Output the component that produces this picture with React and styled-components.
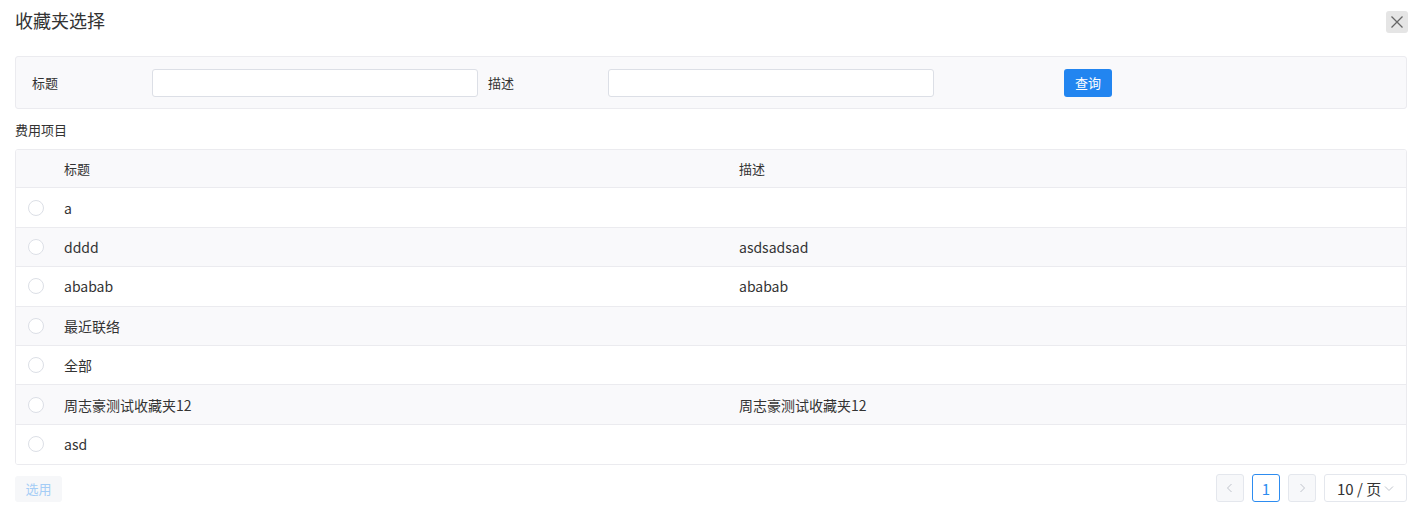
import React from "react";
import styled, { createGlobalStyle } from "styled-components";

const Global = createGlobalStyle`
  html, body { margin: 0; padding: 0; background: #fff; }
  body { font-family: "Noto Sans CJK SC", "Noto Sans", sans-serif; color: #333; }
  * { box-sizing: border-box; }
`;

const Page = styled.div`
  padding: 0 17px 0 15px;
  width: 1424px;
`;

const Header = styled.div`
  height: 42px;
  display: flex;
  align-items: center;
  justify-content: space-between;
  margin-bottom: 14px;
`;

const Title = styled.div`
  font-size: 18px;
  color: #333;
  line-height: 1;
  margin-top: -2px;
`;

const CloseBtn = styled.button`
  width: 22px;
  height: 22px;
  margin-right: -1px;
  margin-top: 1px;
  border: none;
  border-radius: 3px;
  background: #e5e5e5;
  padding: 0;
  display: flex;
  align-items: center;
  justify-content: center;
  cursor: pointer;
`;

const SearchPanel = styled.div`
  height: 53px;
  background: #f9f9fb;
  border: 1px solid #ebebef;
  border-radius: 3px;
  display: flex;
  align-items: center;
  padding-left: 16px;
`;

const FormItem = styled.div`
  width: 456px;
  display: flex;
  align-items: center;
`;

const Label = styled.label`
  width: 120px;
  font-size: 13px;
  color: #333;
`;

const Input = styled.input`
  width: 326px;
  height: 28px;
  border: 1px solid #dcdfe6;
  border-radius: 3px;
  background: #fff;
  outline: none;
`;

const PrimaryBtn = styled.button`
  width: 48px;
  height: 28px;
  border: none;
  border-radius: 3px;
  background: #2285f0;
  color: #fff;
  font-family: inherit;
  font-size: 13px;
  padding: 0;
`;

const SectionTitle = styled.div`
  font-size: 13px;
  color: #333;
  height: 40px;
  display: flex;
  align-items: center;
`;

const Table = styled.div`
  border: 1px solid #ebebef;
  border-radius: 3px;
  overflow: hidden;
`;

const Row = styled.div`
  display: grid;
  grid-template-columns: 48px 675px 1fr;
  align-items: center;
  height: ${(p) => (p.$head ? "38.4px" : "39.4px")};
  background: ${(p) => (p.$striped ? "#f9f9fb" : "#fff")};
  border-bottom: ${(p) => (p.$last ? "none" : "1px solid #ebebef")};
  font-size: ${(p) => (p.$head ? "13px" : "14px")};
  color: #333;
`;

const Cell = styled.div`
  white-space: nowrap;
`;

const RadioCell = styled.div`
  padding-left: 12px;
  display: flex;
  align-items: center;
`;

const Radio = styled.span`
  width: 16px;
  height: 16px;
  border-radius: 50%;
  border: 1px solid #dcdfe6;
  background: #fff;
  display: inline-block;
`;

const Footer = styled.div`
  display: flex;
  justify-content: space-between;
  align-items: center;
  margin-top: 9px;
`;

const GhostBtn = styled.button`
  width: 47px;
  height: 26px;
  border: none;
  border-radius: 3px;
  background: #f6f7f9;
  color: #a4cdf6;
  font-family: inherit;
  font-size: 13px;
  padding: 0;
  margin-top: 1px;
`;

const Pager = styled.div`
  display: flex;
  align-items: center;
  gap: 8px;
`;

const PageBtn = styled.button`
  width: 28px;
  height: 28px;
  border: 1px solid ${(p) => (p.$active ? "#2d8cf0" : "#e4e7ed")};
  border-radius: 3px;
  background: ${(p) => (p.$active ? "#fff" : "#f7f8fa")};
  color: ${(p) => (p.$active ? "#2d8cf0" : "#c0c4cc")};
  font-family: inherit;
  font-size: 15px;
  padding: 0;
  display: flex;
  align-items: center;
  justify-content: center;
`;

const SizeSelect = styled.div`
  width: 83px;
  height: 28px;
  border: 1px solid #e4e7ed;
  border-radius: 3px;
  background: #fff;
  font-size: 15px;
  color: #333;
  display: flex;
  align-items: center;
  padding-left: 12px;
  gap: 2px;
`;

const rows = [
  ["a", ""],
  ["dddd", "asdsadsad"],
  ["ababab", "ababab"],
  ["最近联络", ""],
  ["全部", ""],
  ["周志豪测试收藏夹12", "周志豪测试收藏夹12"],
  ["asd", ""],
];

const Chevron = ({ dir }) => {
  const d =
    dir === "left"
      ? "M7.5 2 L3.5 6 L7.5 10"
      : dir === "right"
      ? "M4.5 2 L8.5 6 L4.5 10"
      : "M2 4.5 L6 8.5 L10 4.5";
  return (
    <svg width="12" height="12" viewBox="0 0 12 12" fill="none">
      <path d={d} stroke="#c0c4cc" strokeWidth="1" />
    </svg>
  );
};

export default function App() {
  return (
    <Page>
      <Global />
      <Header>
        <Title>收藏夹选择</Title>
        <CloseBtn aria-label="close">
          <svg width="14" height="14" viewBox="0 0 14 14">
            <path d="M1.5 1.5 L12.5 12.5 M12.5 1.5 L1.5 12.5" stroke="#666" strokeWidth="1.3" />
          </svg>
        </CloseBtn>
      </Header>
      <SearchPanel>
        <FormItem>
          <Label>标题</Label>
          <Input />
        </FormItem>
        <FormItem>
          <Label>描述</Label>
          <Input />
        </FormItem>
        <FormItem>
          <Label />
          <PrimaryBtn>查询</PrimaryBtn>
        </FormItem>
      </SearchPanel>
      <SectionTitle>费用项目</SectionTitle>
      <Table>
        <Row $head $striped>
          <Cell />
          <Cell>标题</Cell>
          <Cell>描述</Cell>
        </Row>
        {rows.map(([t, d], i) => (
          <Row key={i} $striped={i % 2 === 1} $last={i === rows.length - 1}>
            <RadioCell>
              <Radio />
            </RadioCell>
            <Cell>{t}</Cell>
            <Cell>{d}</Cell>
          </Row>
        ))}
      </Table>
      <Footer>
        <GhostBtn>选用</GhostBtn>
        <Pager>
          <PageBtn>
            <Chevron dir="left" />
          </PageBtn>
          <PageBtn $active>1</PageBtn>
          <PageBtn>
            <Chevron dir="right" />
          </PageBtn>
          <SizeSelect>
            10 / 页
            <Chevron dir="down" />
          </SizeSelect>
        </Pager>
      </Footer>
    </Page>
  );
}
